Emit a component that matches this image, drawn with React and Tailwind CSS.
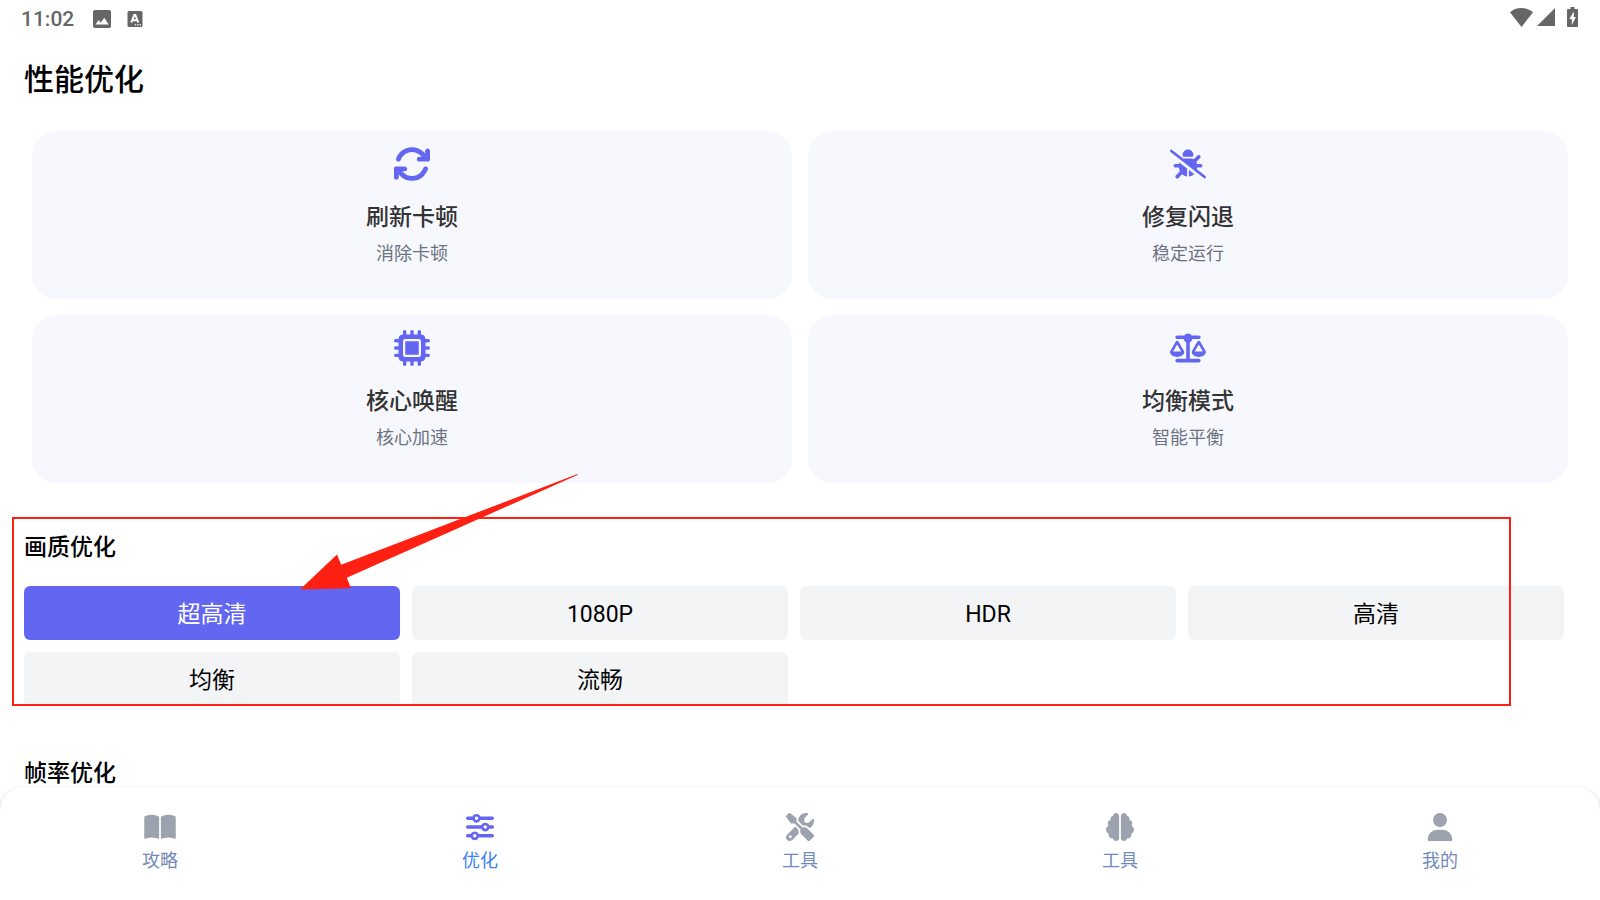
import { useState } from "react";
import {
  FaArrowsRotate,
  FaBugSlash,
  FaMicrochip,
  FaScaleBalanced,
  FaBookOpen,
  FaSliders,
  FaScrewdriverWrench,
  FaBrain,
  FaUser,
} from "react-icons/fa6";

// The rotate glyph has side padding in its box; a tighter view box fills the width.
function RotateIcon(props) {
  return <FaArrowsRotate {...props} viewBox="16 16 480 480" />;
}

const tools = [
  { title: "刷新卡顿", note: "消除卡顿", Icon: RotateIcon },
  { title: "修复闪退", note: "稳定运行", Icon: FaBugSlash },
  { title: "核心唤醒", note: "核心加速", Icon: FaMicrochip },
  { title: "均衡模式", note: "智能平衡", Icon: FaScaleBalanced },
];

const qualities = ["超高清", "1080P", "HDR", "高清", "均衡", "流畅"];

const tabs = [
  { id: "guide", label: "攻略", Icon: FaBookOpen },
  { id: "optimize", label: "优化", Icon: FaSliders },
  { id: "tools", label: "工具", Icon: FaScrewdriverWrench },
  { id: "brain", label: "工具", Icon: FaBrain },
  { id: "mine", label: "我的", Icon: FaUser },
];

function StatusBar() {
  return (
    <header className="flex h-9 shrink-0 items-center justify-between pr-[22px] pl-[21px] text-[#666666]">
      <div className="flex items-center pt-0.5">
        <time className="text-[21px] leading-6 font-medium">11:02</time>
        <svg className="ml-[19px] size-[18px]" viewBox="0 0 18 18" aria-hidden="true">
          <rect width="18" height="18" rx="2" fill="currentColor" />
          <path d="M2.5 14.5 5.600 10l2.100 2.700 3.600-4.900 4.400 6.700z" fill="#fff" />
        </svg>
        <svg className="ml-4 size-4" viewBox="0 0 16 16" aria-hidden="true">
          <rect x="0.5" width="15" height="16" rx="1.5" fill="currentColor" />
          <path
            d="M4.3 11.5 7.3 4h1l3 7.5M5.5 9.3h4.6"
            fill="none"
            stroke="#fff"
            strokeWidth="2"
          />
          <path d="M7.8 13.2h1.4v1.4H7.8zM10.2 13.2h1.4v1.4h-1.4zM12.6 13.2H14v1.4h-1.4z" fill="#fff" />
        </svg>
      </div>
      <div className="flex items-center pb-0.5">
        <svg className="h-[19px] w-[23px]" viewBox="0 0 23 19" fill="currentColor" aria-hidden="true">
          <path d="M11.5 19 0 4.2C3 1.600 7 0 11.500 0S20 1.600 23 4.200z" />
        </svg>
        <svg className="ml-1 size-[18px]" viewBox="0 0 18 18" fill="currentColor" aria-hidden="true">
          <path d="M18 0v18H0z" />
        </svg>
        <svg className="ml-3 h-5 w-[11px]" viewBox="0 0 11 20" aria-hidden="true">
          <path
            d="M3.500 0h4v2H10a1 1 0 0 1 1 1v16a1 1 0 0 1-1 1H1a1 1 0 0 1-1-1V3a1 1 0 0 1 1-1h2.500z"
            fill="currentColor"
          />
          <path d="M6.800 4.500 2.300 12h2.500V18L8.900 10H6.800z" fill="#fff" />
        </svg>
      </div>
    </header>
  );
}

function ToolCard({ title, note, Icon }) {
  return (
    <button
      type="button"
      className="flex h-[168px] flex-col items-center rounded-3xl bg-[#f7f8fe] pt-[15px]"
    >
      <Icon className="size-9 text-[#6366f1]" aria-hidden="true" />
      <span className="mt-5 text-[23px] leading-8 font-medium text-[#333333]">{title}</span>
      <span className="mt-2 text-[18px] leading-6 text-[#6b7280]">{note}</span>
    </button>
  );
}

function Callout() {
  return (
    <div className="pointer-events-none absolute inset-0" aria-hidden="true">
      <div className="absolute top-0 right-[89px] bottom-0 left-3 border-2 border-[#ff2014]" />
      <svg
        className="absolute -top-11 left-[300px] h-[118px] w-[280px]"
        viewBox="0 0 280 118"
        fill="#ff2014"
      >
        <path d="M0 116.500 37 81.500l4.200 10.200L277.500 1v1L46.800 104.700 51 115.300z" />
      </svg>
    </div>
  );
}

export default function App() {
  const [quality, setQuality] = useState("超高清");
  const [tab, setTab] = useState("optimize");

  return (
    <div className="flex h-screen flex-col overflow-hidden bg-white font-[Roboto,'Noto_Sans_CJK_SC',sans-serif] text-black">
      <StatusBar />
      <main className="min-h-0 flex-1 overflow-y-auto [scrollbar-width:none]">
        <h1 className="mt-[21px] px-6 text-[30px] leading-[46px] font-medium">性能优化</h1>
        <section className="mt-7 grid grid-cols-2 gap-4 px-8">
          {tools.map((tool) => (
            <ToolCard key={tool.title} {...tool} />
          ))}
        </section>
        <section className="relative mt-[34px] pt-[13px]">
          <h2 className="px-6 text-[23px] leading-9 font-medium">画质优化</h2>
          <div className="mt-5 grid grid-cols-4 gap-3 pr-9 pl-6">
            {qualities.map((name) => (
              <button
                key={name}
                type="button"
                aria-pressed={quality === name}
                onClick={() => setQuality(name)}
                className={
                  quality === name
                    ? "h-[54px] rounded-md bg-[#6366f1] pt-1 text-[23px] text-white"
                    : "h-[54px] rounded-md bg-[#f3f4f6] pt-1 text-[23px] text-black"
                }
              >
                {name}
              </button>
            ))}
          </div>
          <Callout />
        </section>
        <section className="mt-[50px]">
          <h2 className="px-6 text-[23px] leading-9 font-medium">帧率优化</h2>
        </section>
      </main>
      <nav className="relative grid h-[113px] shrink-0 grid-cols-5 rounded-t-3xl bg-white shadow-[0_4px_6px_rgba(0,0,0,0.3)]">
        {tabs.map(({ id, label, Icon }) => (
          <button
            key={id}
            type="button"
            aria-current={tab === id ? "page" : undefined}
            onClick={() => setTab(id)}
            className="flex flex-col items-center pt-[26px]"
          >
            <Icon
              className={tab === id ? "h-7 w-8 text-[#6366f1]" : "h-7 w-8 text-[#9ca3af]"}
              aria-hidden="true"
            />
            <span
              className={
                tab === id
                  ? "mt-1.5 text-[18px] leading-7 text-[#3b82f6]"
                  : "mt-1.5 text-[18px] leading-7 text-[#7488bb]"
              }
            >
              {label}
            </span>
          </button>
        ))}
      </nav>
    </div>
  );
}
